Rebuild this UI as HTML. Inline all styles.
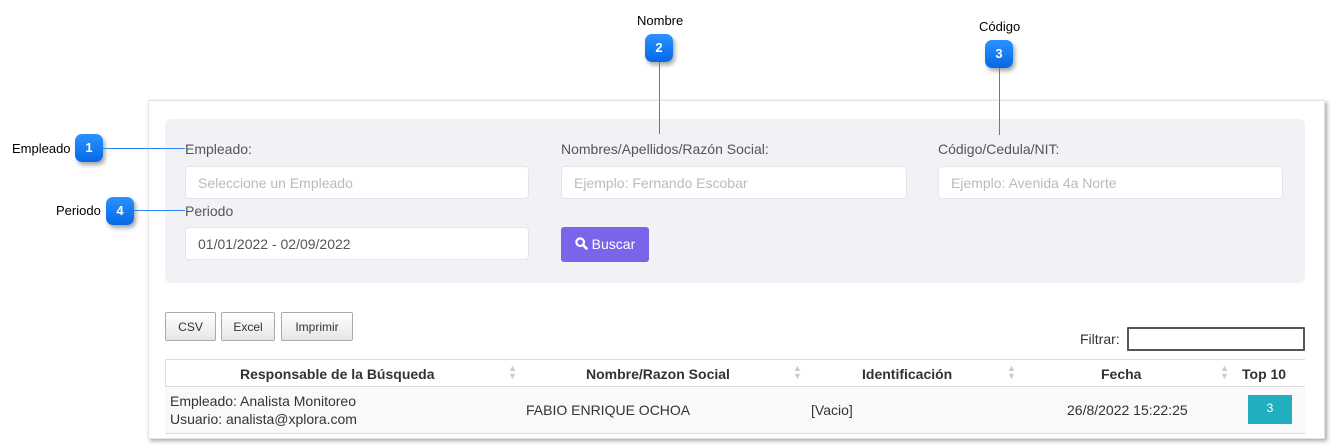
<!DOCTYPE html>
<html><head><style>
body{margin:0;width:1331px;height:446px;background:#fff;font-family:"Liberation Sans",sans-serif;position:relative;overflow:hidden}
.a{position:absolute}
.badge{position:absolute;width:28px;height:28px;border-radius:7px;background:linear-gradient(#2a93ff,#0668e6);color:#fff;font-weight:bold;font-size:13px;text-align:center;line-height:28px;box-shadow:2px 3px 4px rgba(0,0,0,.35)}
.lbl{position:absolute;font-size:13px;color:#000}
.line{position:absolute;background:#2a86f0}
.card{left:148px;top:100px;width:1175px;height:337px;border:1px solid #e4e4e4;box-shadow:2px 2px 4px rgba(0,0,0,.35)}
.panel{left:165px;top:119px;width:1140px;height:164px;background:#f1f2f6;border-radius:6px}
.fl{position:absolute;font-size:14px;color:#555}
.inp{position:absolute;height:33px;width:344px;background:#fff;border:1px solid #e6e6ea;border-radius:4px;font-size:14px;color:#bbb;line-height:33px;padding-left:12px;box-sizing:border-box}
.btn{position:absolute;top:312px;height:29px;border:1px solid #aaa;border-radius:2px;background:linear-gradient(#fff,#e6e6e6);font-size:12px;color:#333;text-align:center;line-height:28px;box-sizing:border-box}
th{font-size:14px}
</style></head><body>
<div class="a card"></div>
<div class="a panel"></div>

<div class="lbl" style="left:12px;top:141px">Empleado</div>
<div class="badge" style="left:75px;top:134px">1</div>
<div class="line" style="left:103px;top:148px;width:82px;height:1px"></div>
<div class="lbl" style="left:56px;top:203px">Periodo</div>
<div class="badge" style="left:106px;top:197px">4</div>
<div class="line" style="left:134px;top:210px;width:51px;height:1px"></div>
<div class="lbl" style="left:637px;top:13px">Nombre</div>
<div class="badge" style="left:645px;top:34px">2</div>
<div class="line" style="left:659px;top:62px;width:1px;height:72px"></div>
<div class="lbl" style="left:979px;top:19px">Código</div>
<div class="badge" style="left:985px;top:40px">3</div>
<div class="line" style="left:999px;top:68px;width:1px;height:67px"></div>

<div class="fl" style="left:185px;top:141px">Empleado:</div>
<div class="fl" style="left:561px;top:141px">Nombres/Apellidos/Razón Social:</div>
<div class="fl" style="left:938px;top:141px">Código/Cedula/NIT:</div>
<div class="inp" style="left:185px;top:166px">Seleccione un Empleado</div>
<div class="inp" style="left:561px;top:166px;width:346px">Ejemplo: Fernando Escobar</div>
<div class="inp" style="left:938px;top:166px;width:345px">Ejemplo: Avenida 4a Norte</div>
<div class="fl" style="left:185px;top:203px">Periodo</div>
<div class="inp" style="left:185px;top:227px;color:#555">01/01/2022 - 02/09/2022</div>
<div class="a" style="left:561px;top:227px;width:88px;height:35px;background:#7964ea;border-radius:3px;color:#fff;font-size:14px;line-height:35px;text-align:center">
<svg width="13" height="13" viewBox="0 0 13 13" style="vertical-align:-1px"><circle cx="5.2" cy="5.2" r="3.8" fill="none" stroke="#fff" stroke-width="2.2"/><line x1="8" y1="8" x2="11.5" y2="11.5" stroke="#fff" stroke-width="2.6" stroke-linecap="round"/></svg> Buscar</div>

<div class="btn" style="left:165px;width:51px">CSV</div>
<div class="btn" style="left:221px;width:54px">Excel</div>
<div class="btn" style="left:281px;width:72px">Imprimir</div>
<div class="a" style="left:1080px;top:331px;font-size:14px;color:#333">Filtrar:</div>
<div class="a" style="left:1127px;top:327px;width:178px;height:24px;border:2px solid #555;box-sizing:border-box;border-radius:1px"></div>

<div class="a" style="left:165px;top:359px;width:1140px;height:1px;background:#ddd"></div>
<div class="a" style="left:165px;top:359px;width:1px;height:74px;background:#ddd"></div>
<div class="a" style="left:165px;top:386px;width:1140px;height:46px;background:#f9f9f9;border-top:1px solid #ddd;border-bottom:1px solid #ddd"></div>
<div class="a" style="top:366px;left:240px;font-size:14px;font-weight:bold;color:#333">Responsable de la Búsqueda</div>
<div class="a" style="top:366px;left:586px;font-size:14px;font-weight:bold;color:#333">Nombre/Razon Social</div>
<div class="a" style="top:366px;left:862px;font-size:14px;font-weight:bold;color:#333">Identificación</div>
<div class="a" style="top:366px;left:1101px;font-size:14px;font-weight:bold;color:#333">Fecha</div>
<div class="a" style="top:366px;left:1242px;font-size:14px;font-weight:bold;color:#333">Top 10</div>
<div class="a" style="top:364px;left:508px;font-size:9px;color:#ccc;line-height:8px">▲<br>▼</div>
<div class="a" style="top:364px;left:793px;font-size:9px;color:#ccc;line-height:8px">▲<br>▼</div>
<div class="a" style="top:364px;left:1007px;font-size:9px;color:#ccc;line-height:8px">▲<br>▼</div>
<div class="a" style="top:364px;left:1220px;font-size:9px;color:#ccc;line-height:8px">▲<br>▼</div>
<div class="a" style="top:392px;left:170px;font-size:14px;color:#333;line-height:18px">Empleado: Analista Monitoreo<br>Usuario: analista@xplora.com</div>
<div class="a" style="top:402px;left:526px;font-size:14px;color:#333">FABIO ENRIQUE OCHOA</div>
<div class="a" style="top:402px;left:811px;font-size:14px;color:#333">[Vacio]</div>
<div class="a" style="top:402px;left:1067px;font-size:14px;color:#333">26/8/2022 15:22:25</div>
<div class="a" style="top:395px;left:1248px;width:44px;height:29px;background:#21aebe;color:#fff;font-size:12px;text-align:center;line-height:26px">3</div>
</body></html>
